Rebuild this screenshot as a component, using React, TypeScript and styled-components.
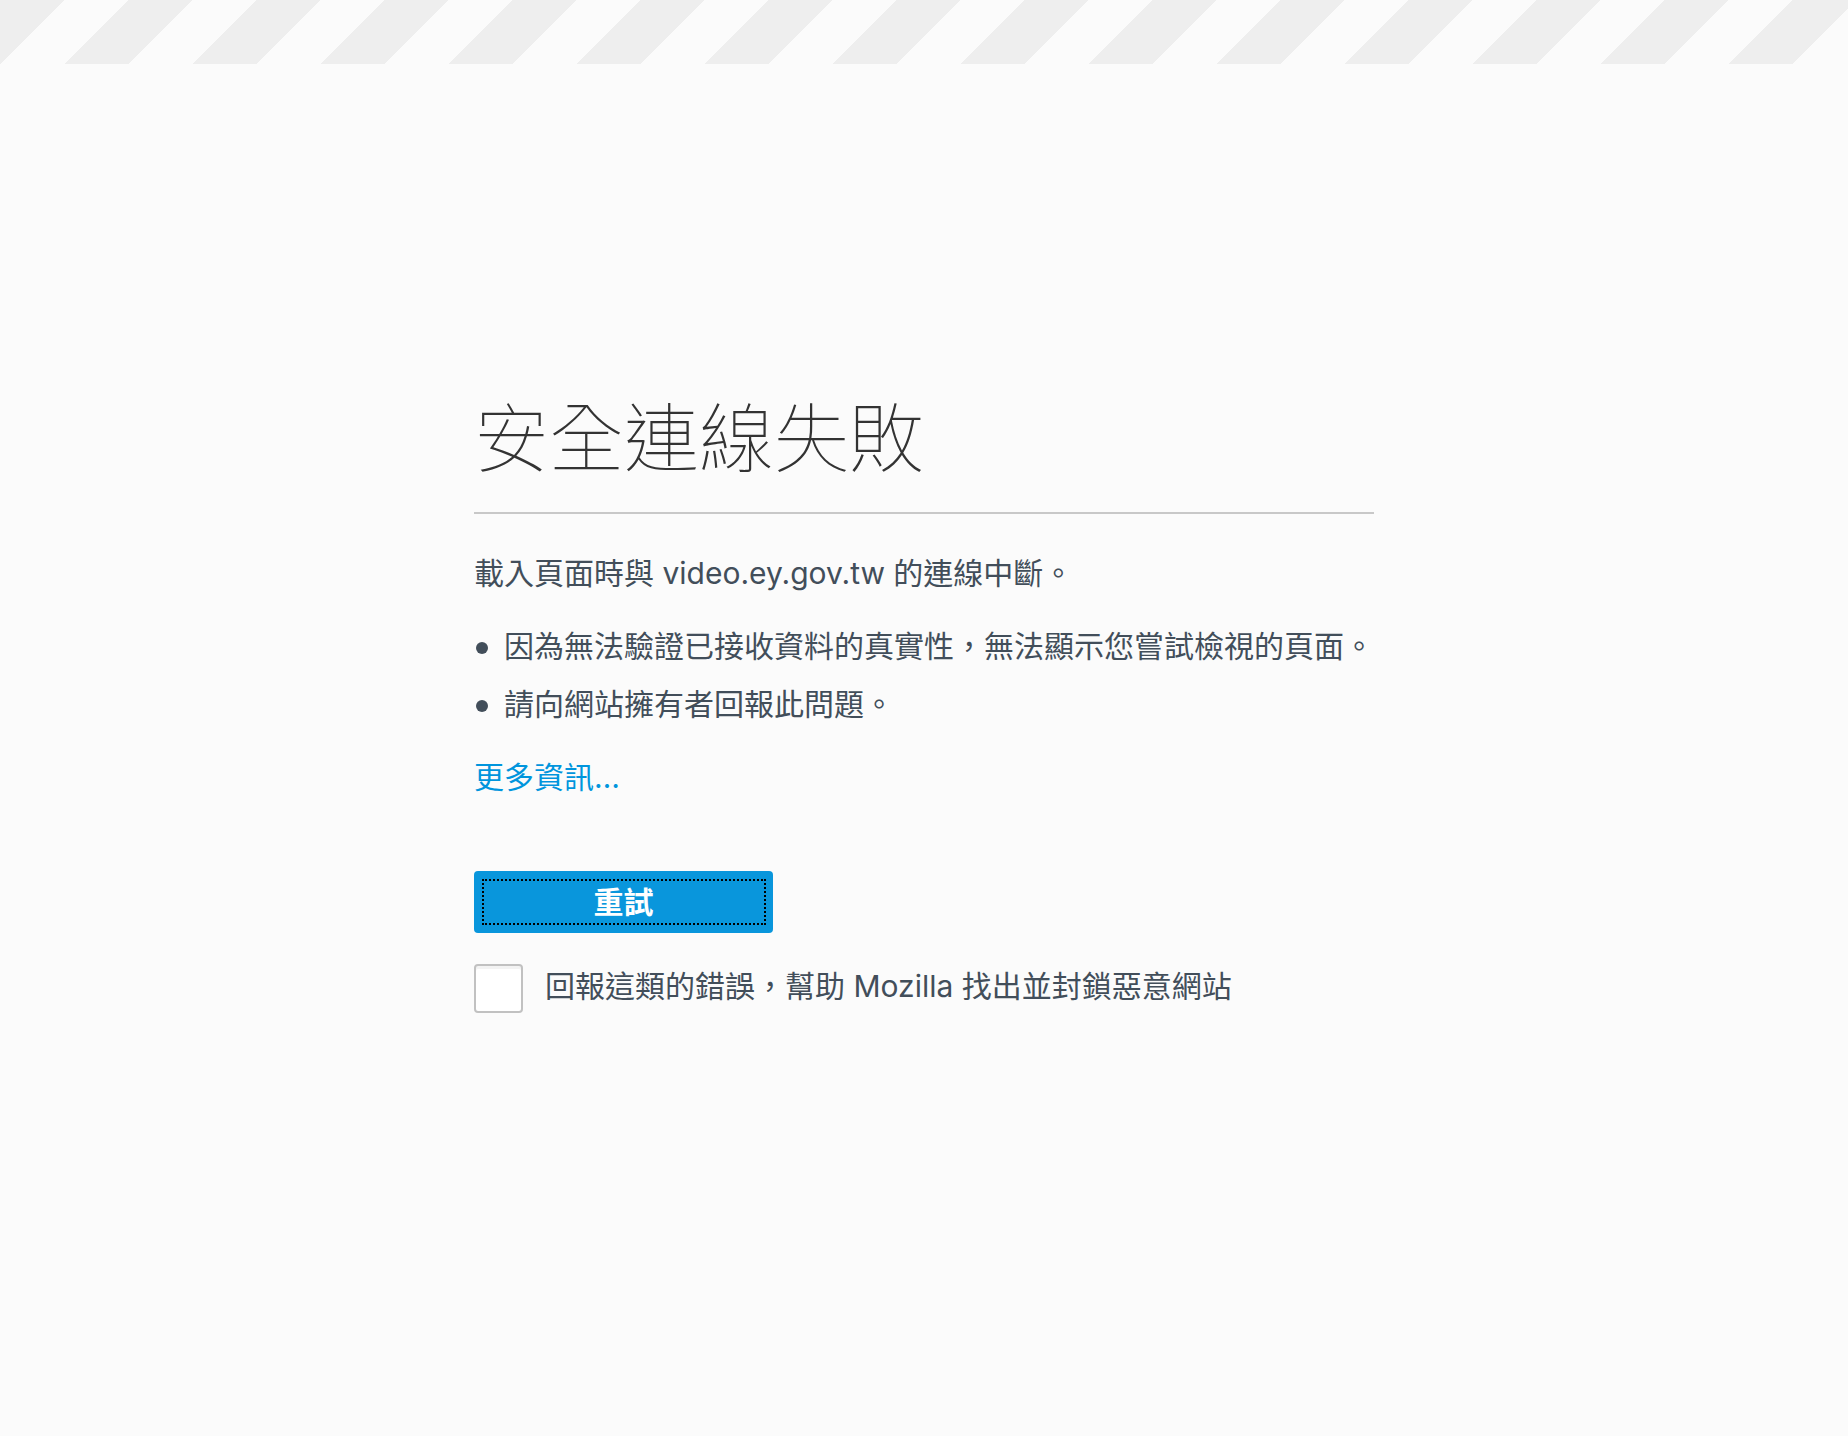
import React from "react";
import styled, { createGlobalStyle } from "styled-components";

const GlobalStyle = createGlobalStyle`
  html, body {
    margin: 0;
    padding: 0;
  }
  body {
    background: #fbfbfb;
    color: #424e5a;
    font-family: Inter, "Noto Sans CJK TC", "Noto Sans", sans-serif;
    font-size: 30px;
  }
`;

const Page = styled.div`
  min-height: 1436px;
  display: flex;
  flex-direction: column;
`;

const Stripes = styled.div`
  height: 64px;
  flex-shrink: 0;
  background-image: linear-gradient(
    135deg,
    #eeeeee 25%,
    transparent 25%,
    transparent 50%,
    #eeeeee 50%,
    #eeeeee 75%,
    transparent 75%
  );
  background-size: 128px 128px;
`;

const Container = styled.main`
  width: 900px;
  margin: 0 auto;
  padding-top: 325px;
`;

const Title = styled.h1`
  margin: 0;
  padding-bottom: 33px;
  border-bottom: 2px solid #c8c8c8;
  font-family: "Noto Sans CJK TC", sans-serif;
  font-size: 75px;
  font-weight: 100;
  line-height: 90px;
  color: #333;
`;

const Intro = styled.p`
  margin: 37px 0 0;
  line-height: 45px;
`;

const Reasons = styled.ul`
  margin: 28px 0 0;
  padding: 0;
  list-style: none;
`;

const Reason = styled.li`
  position: relative;
  padding-left: 30px;
  line-height: 45px;

  & + & {
    margin-top: 13px;
  }

  &::before {
    content: "";
    position: absolute;
    left: 2px;
    top: 18px;
    width: 12px;
    height: 12px;
    border-radius: 50%;
    background: #424e5a;
  }
`;

const MoreInfo = styled.a`
  display: block;
  margin-top: 28px;
  line-height: 45px;
  color: #0095dd;
  text-decoration: none;
`;

const RetryButton = styled.button`
  position: relative;
  display: block;
  margin-top: 71px;
  width: 299px;
  height: 62px;
  padding: 0 0 4px;
  border: none;
  border-radius: 4px;
  background: #0996dc;
  color: #fff;
  font-family: inherit;
  font-size: 30px;
  font-weight: 700;
  cursor: pointer;

  &::after {
    content: "";
    position: absolute;
    top: 8px;
    left: 8px;
    right: 7px;
    bottom: 8px;
    border: 2px dotted #000;
  }
`;

const ReportRow = styled.label`
  display: flex;
  align-items: center;
  gap: 22px;
  margin-top: 31px;
  line-height: 45px;
`;

const CheckBox = styled.span`
  display: block;
  flex-shrink: 0;
  width: 49px;
  height: 49px;
  box-sizing: border-box;
  border: 2px solid #c1c1c1;
  border-radius: 4px;
  background: #fff;
  box-shadow: inset 0 3px 0 #f3f3f3;
`;

const ReportText = styled.span`
  padding-bottom: 4px;
`;

export default function App() {
  return (
    <>
      <GlobalStyle />
      <Page>
        <Stripes />
        <Container>
          <Title>安全連線失敗</Title>
          <Intro>載入頁面時與 video.ey.gov.tw 的連線中斷。</Intro>
          <Reasons>
            <Reason>因為無法驗證已接收資料的真實性，無法顯示您嘗試檢視的頁面。</Reason>
            <Reason>請向網站擁有者回報此問題。</Reason>
          </Reasons>
          <MoreInfo href="#">更多資訊…</MoreInfo>
          <RetryButton>重試</RetryButton>
          <ReportRow>
            <CheckBox />
            <ReportText>回報這類的錯誤，幫助 Mozilla 找出並封鎖惡意網站</ReportText>
          </ReportRow>
        </Container>
      </Page>
    </>
  );
}
